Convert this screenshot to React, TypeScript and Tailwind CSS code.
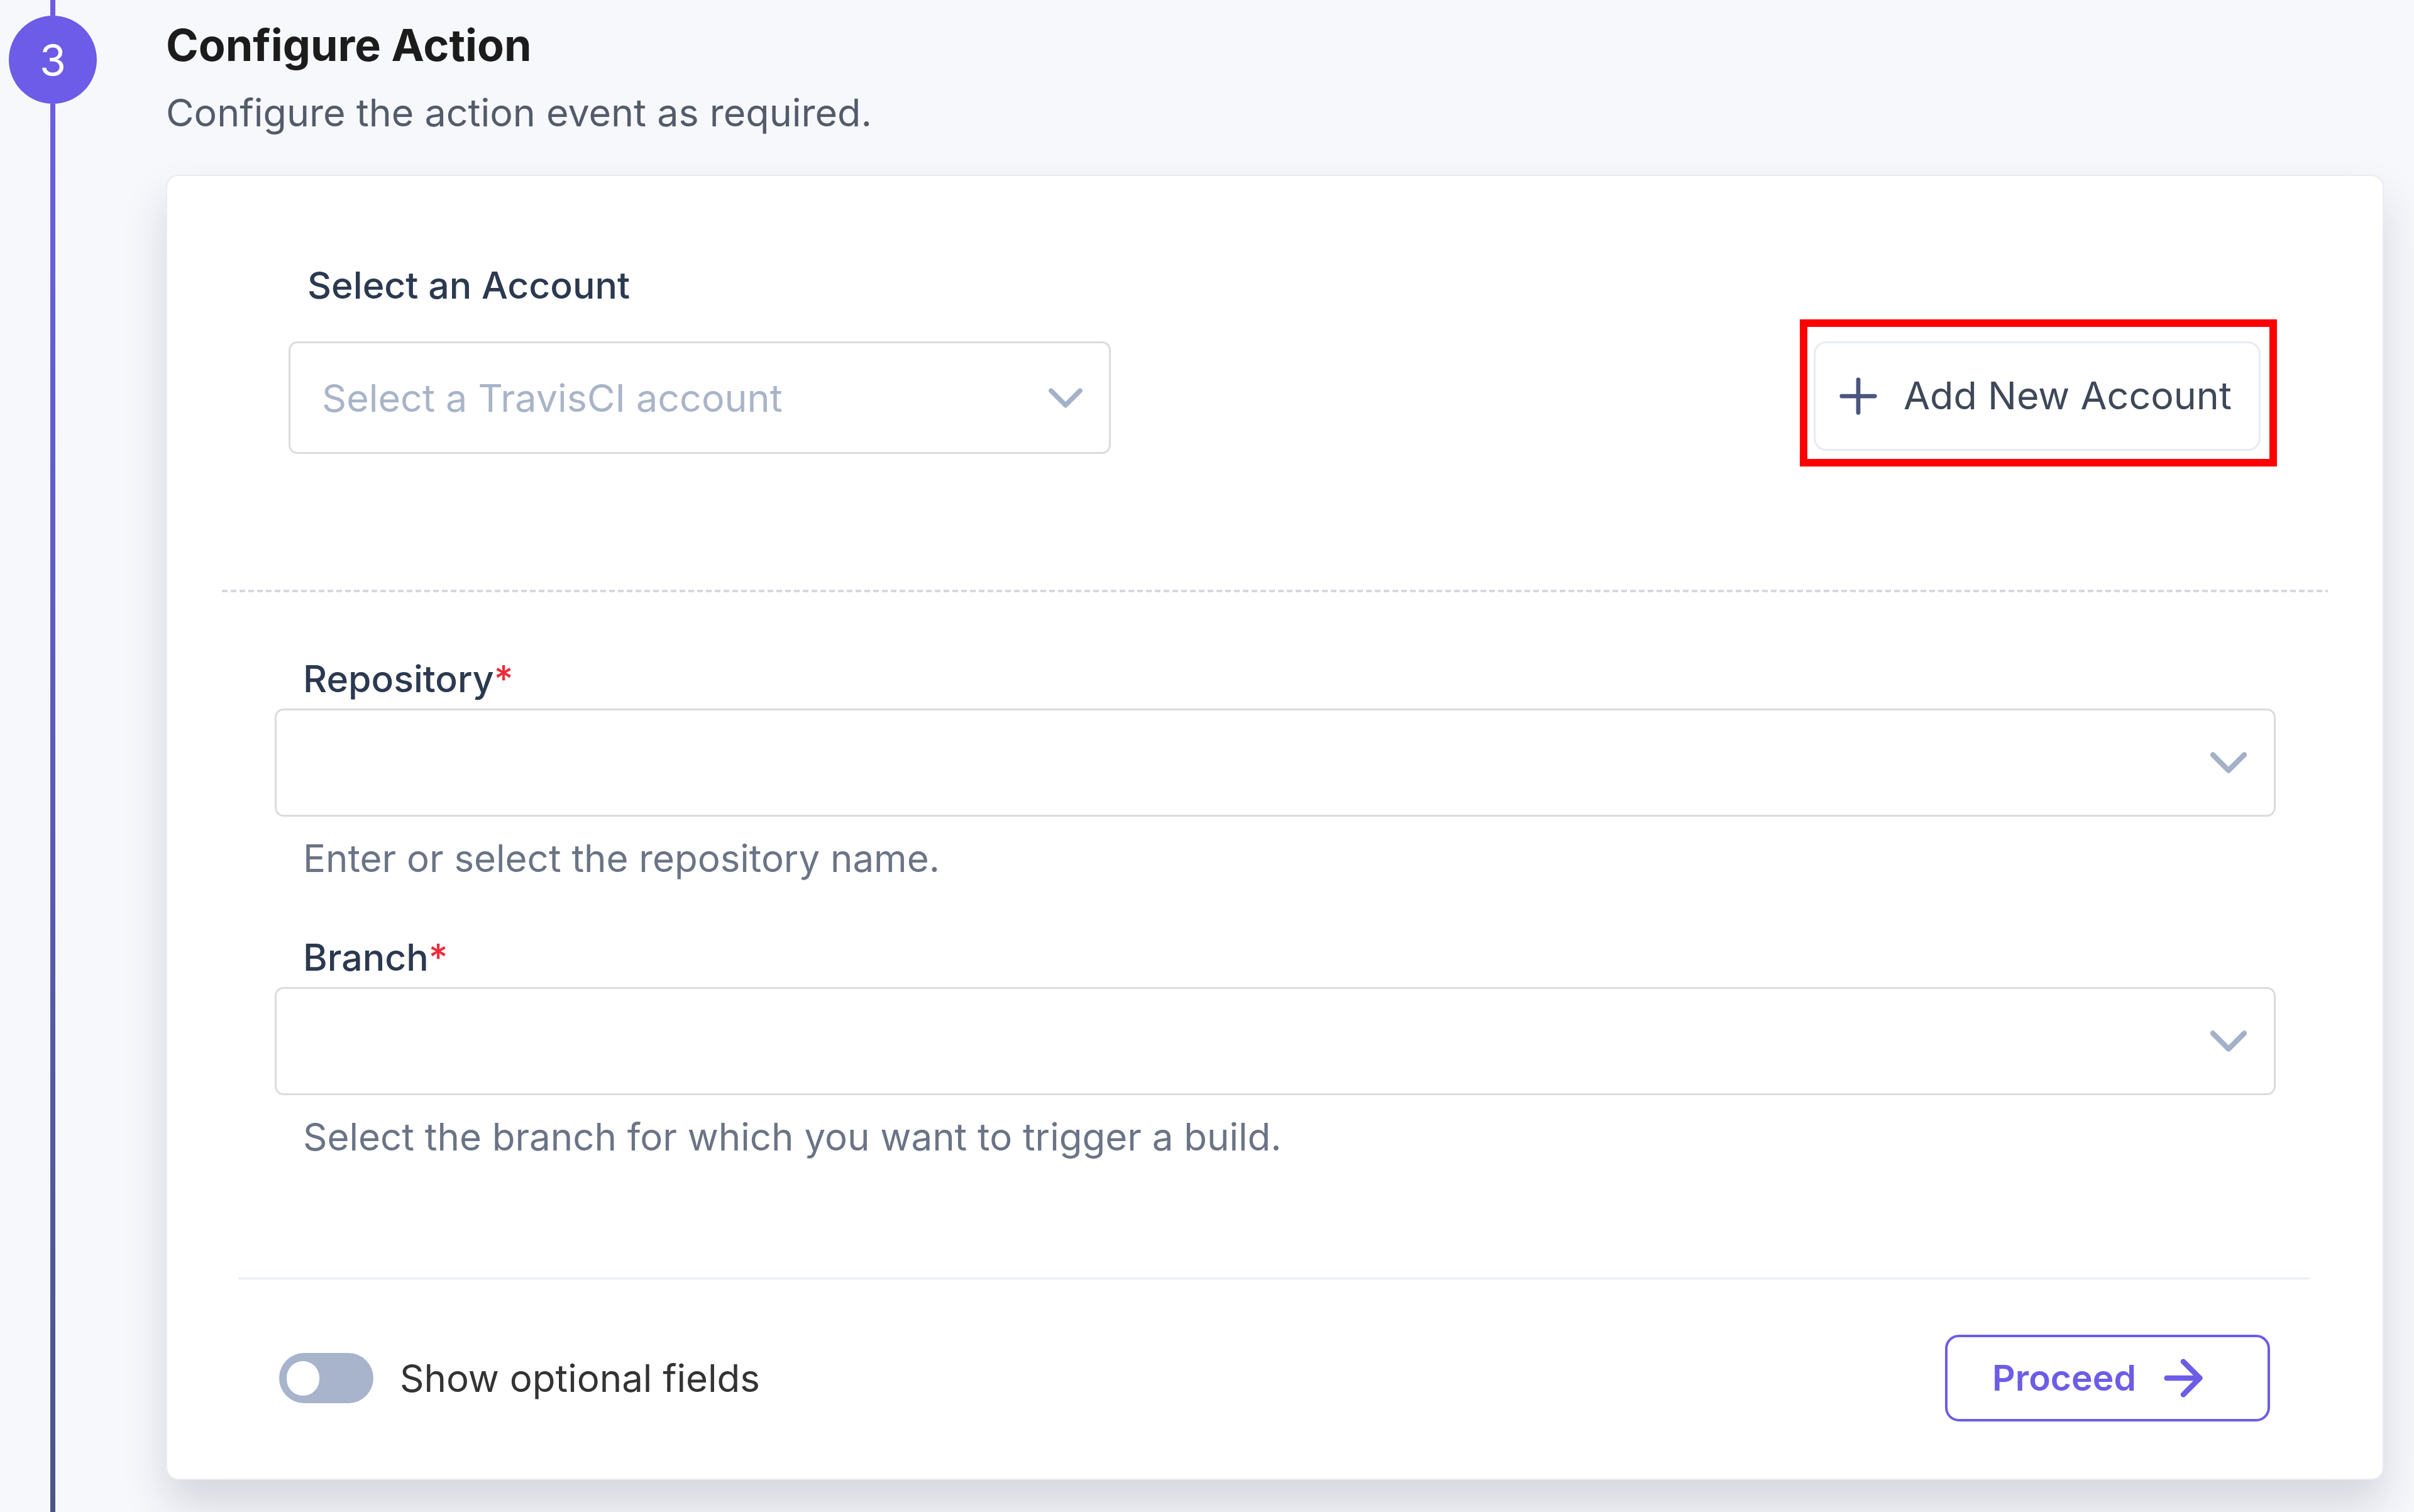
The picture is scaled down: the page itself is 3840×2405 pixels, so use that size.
import { ArrowRight, ChevronDown, Plus } from 'lucide-react';

function Chevron({ size }: { size: number }) {
  return <ChevronDown size={size} strokeWidth={2} className="shrink-0 text-[#a3b1c9]" />;
}

function SelectBox({ placeholder, className }: { placeholder?: string; className: string }) {
  return (
    <div
      className={`flex items-center justify-between rounded-[14px] border-[3px] border-[#dcdcdc] bg-white ${className}`}
    >
      <span className="text-[61px] leading-[68px] text-[#a9b4c8]">{placeholder}</span>
      <Chevron size={placeholder ? 92 : 100} />
    </div>
  );
}

function Field({ label, help }: { label: string; help: string }) {
  return (
    <div className="flex flex-col">
      <div className="ml-[45px] text-[59px] leading-[68px] font-medium text-[#2b3950]">
        {label}
        <span className="text-[#ee2b3a]">*</span>
      </div>
      <SelectBox className="mt-[13px] h-[172px] pl-[52px] pr-[22px]" />
      <div className="ml-[45px] mt-[32px] text-[60px] leading-[68px] text-[#6b7486]">{help}</div>
    </div>
  );
}

export default function App() {
  return (
    <div className="flex h-[2405px] w-full overflow-hidden bg-[#f7f8fc] font-['Inter',sans-serif]">
      {/* Stepper rail */}
      <div className="ml-[14px] flex w-[140px] shrink-0 flex-col items-center">
        <div className="h-[25px] w-[8px] bg-[#6c5ce7]" />
        <div className="flex h-[140px] w-[140px] items-center justify-center rounded-full bg-[#6c5ce7] text-[68px] text-white">
          3
        </div>
        <div className="w-[8px] flex-1 bg-gradient-to-b from-[#6c5ce7] to-[#4a5585]" />
      </div>

      {/* Step content */}
      <div className="ml-[110px] flex w-[3528px] shrink-0 flex-col pt-[31px]">
        <h1 className="text-[70px] leading-[82px] font-bold text-[#1c1c1c]">Configure Action</h1>
        <p className="mt-[34px] text-[61px] leading-[65px] text-[#535b6b]">Configure the action event as required.</p>

        <div className="mt-[66px] flex flex-col rounded-[20px] border-2 border-[#ebecf0] bg-white shadow-[0_40px_70px_rgba(30,35,60,0.16)]">
          {/* Account */}
          <div className="flex flex-col pl-[193px] pr-[168px] pt-[140px]">
            <div className="ml-[30px] text-[59px] leading-[68px] font-medium text-[#2b3950]">Select an Account</div>
            <div className="mt-[20px] flex items-start justify-between">
              <SelectBox
                placeholder="Select a TravisCI account"
                className="mt-[35px] h-[179px] w-[1308px] pl-[50px] pr-[23px]"
              />
              <div className="border-[12px] border-[#ff0000] pb-[13px] pl-[10px] pr-[14px] pt-[23px]">
                <button className="flex h-[174px] w-[711px] items-center rounded-[20px] border-[3px] border-[#e8ebf1] bg-white pl-[23px] text-[61px] text-[#3e4859]">
                  <Plus size={90} strokeWidth={1.8} className="shrink-0 text-[#4b5680]" />
                  <span className="ml-[27px]">Add New Account</span>
                </button>
              </div>
            </div>
          </div>

          <div className="mx-[87px] mt-[196px] h-[4px] bg-[repeating-linear-gradient(90deg,#d5d8de_0_9px,transparent_9px_14px)]" />

          {/* Fields */}
          <div className="flex flex-col gap-[90px] pl-[171px] pr-[170px] pt-[104px]">
            <Field label="Repository" help="Enter or select the repository name." />
            <Field label="Branch" help="Select the branch for which you want to trigger a build." />
          </div>

          <div className="ml-[113px] mr-[116px] mt-[190px] h-[3px] bg-[#e9edf4]" />

          {/* Footer */}
          <div className="flex items-center justify-between pb-[91px] pl-[178px] pr-[179px] pt-[88px]">
            <div className="flex items-center">
              <div className="flex h-[80px] w-[150px] items-center rounded-full bg-[#a7b4cc] pl-[12px]">
                <div className="h-[55px] w-[52px] rounded-full bg-white" />
              </div>
              <span className="ml-[42px] text-[60px] text-[#333333]">Show optional fields</span>
            </div>
            <button className="flex h-[138px] w-[517px] items-center rounded-[22px] border-4 border-[#6c5ce7] bg-white pl-[71px] text-[57px] font-semibold text-[#6c5ce7]">
              Proceed
              <ArrowRight size={90} strokeWidth={2.3} className="ml-[30px] shrink-0" />
            </button>
          </div>
        </div>
      </div>
    </div>
  );
}
